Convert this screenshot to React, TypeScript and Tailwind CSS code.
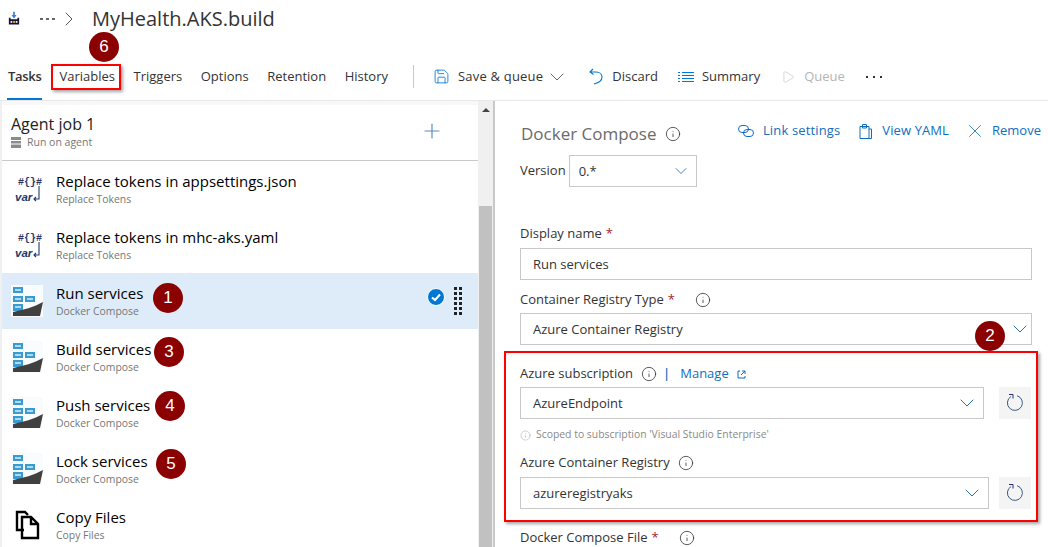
import React from "react";
import { ChevronDown, ChevronRight, Info, Plus, Play, Save, X } from "lucide-react";

const font = "font-['Open_Sans','Liberation_Sans',sans-serif]";

const Badge = ({ n, className }: { n: number; className: string }) => (
  <div className={`absolute flex h-[30px] w-[30px] items-center justify-center rounded-full bg-[#8b0000] font-['Liberation_Sans',sans-serif] text-[17px] text-white ${className}`}>
    {n}
  </div>
);

const DockerIcon = () => (
  <svg width="32" height="32" viewBox="0 0 32 32" className="shrink-0">
    <rect x="0" y="0" width="32" height="32" fill="#fafbfc" />
    <rect x="2" y="2" width="10" height="6" fill="#3a9bd0" />
    <rect x="2" y="11" width="10" height="6" fill="#3a9bd0" />
    <rect x="14" y="11" width="10" height="6" fill="#3a9bd0" />
    <rect x="2" y="19" width="10" height="7" fill="#3a9bd0" />
    <rect x="4" y="4" width="6" height="2" fill="#a9dcf3" />
    <rect x="4" y="13" width="6" height="2" fill="#a9dcf3" />
    <rect x="16" y="13" width="6" height="2" fill="#a9dcf3" />
    <rect x="4" y="21" width="6" height="2" fill="#a9dcf3" />
    <path d="M2 27 C12 25 23 22 32 17 L29 31 L2 31 Z" fill="#404040" />
  </svg>
);

const VarIcon = () => (
  <svg width="32" height="32" viewBox="0 0 32 32" className="shrink-0">
    <text x="7" y="12" fontSize="10" fontWeight="700" fill="#1f3a6e" fontFamily="Liberation Mono, monospace">{"#{}#"}</text>
    <text x="4" y="28" fontSize="11.5" fontStyle="italic" fontWeight="700" fill="#1f3a6e" fontFamily="Liberation Sans, sans-serif">var</text>
    <path d="M28 13 V26 H23 M25 24 L23 26 L25 28" fill="none" stroke="#1f3a6e" strokeWidth="1.1" />
  </svg>
);

const CopyIcon = () => (
  <svg width="32" height="32" viewBox="0 0 32 32" className="shrink-0">
    <path d="M13 21 H6 V3 H14 L17 6" fill="none" stroke="#000" strokeWidth="2.4" />
    <path d="M11 8 H20 L27 15 V29 H11 Z M20 8 V15 H27" fill="none" stroke="#000" strokeWidth="2.4" />
  </svg>
);

const FactoryIcon = () => (
  <svg width="12" height="15" viewBox="0 0 14 16">
    <path d="M7 0 V6" stroke="#3a7fd0" strokeWidth="2" />
    <path d="M4 4 L7 8 L10 4 Z" fill="#3a7fd0" />
    <path d="M1 7 H3 V9 H11 V7 H13 V15 H1 Z" fill="#1a1030" />
    <rect x="3" y="11" width="2" height="2" fill="#fff" />
    <rect x="6" y="11" width="2" height="2" fill="#f2d94e" />
    <rect x="9" y="11" width="2" height="2" fill="#fff" />
  </svg>
);

const rows = [
  { title: "Replace tokens in appsettings.json", sub: "Replace Tokens", icon: <VarIcon /> },
  { title: "Replace tokens in mhc-aks.yaml", sub: "Replace Tokens", icon: <VarIcon /> },
  { title: "Run services", sub: "Docker Compose", icon: <DockerIcon />, selected: true },
  { title: "Build services", sub: "Docker Compose", icon: <DockerIcon /> },
  { title: "Push services", sub: "Docker Compose", icon: <DockerIcon /> },
  { title: "Lock services", sub: "Docker Compose", icon: <DockerIcon /> },
  { title: "Copy Files", sub: "Copy Files", icon: <CopyIcon /> },
];

const TaskRow = ({ title, sub, icon, selected }: { title: string; sub: string; icon: React.ReactNode; selected?: boolean }) => (
  <div className={`flex h-14 shrink-0 items-center pl-[9px] ${selected ? "bg-[#deecf9]" : ""}`}>
    {icon}
    <div className="ml-[13px] flex-1">
      <div className="mb-[2px] text-[15px] leading-[19px] text-black">{title}</div>
      <div className="text-[10.4px] leading-[13px] text-[#767676]">{sub}</div>
    </div>
    {selected && (
      <div className="flex items-center">
        <svg width="18" height="18" viewBox="0 0 18 18" className="mb-[8px]">
          <circle cx="9" cy="9" r="8.5" fill="#0078d4" stroke="#fff" strokeWidth="1" />
          <path d="M5 9.5 L8 12 L13 6.5" fill="none" stroke="#fff" strokeWidth="2" />
        </svg>
        <div className="ml-[9px] mr-[16px] grid grid-cols-2 gap-x-[2px] gap-y-[2px]">
          {Array.from({ length: 12 }).map((_, i) => (
            <div key={i} className="h-[3px] w-[3px] bg-[#222]" />
          ))}
        </div>
      </div>
    )}
  </div>
);

const Select = ({ value, className, textClass = "pl-3", chevronClass = "mr-1", chevronSize = 24 }: { value: string; className: string; textClass?: string; chevronClass?: string; chevronSize?: number }) => (
  <div className={`flex h-8 items-center justify-between border border-[#c8c8c8] bg-white text-[13px] text-[#333] ${textClass} ${className}`}>
    <span className="pt-[2px]">{value}</span>
    <ChevronDown size={chevronSize} strokeWidth={1} className={`text-[#2b6ea8] ${chevronClass}`} />
  </div>
);

const RefreshButton = () => (
  <div className="flex h-8 w-8 items-center justify-center bg-[#f4f4f4]">
    <svg width="18" height="18" viewBox="0 0 18 18">
      <path d="M5 2.5 A7.5 7.5 0 1 0 11 1.7" fill="none" stroke="#3b5a85" strokeWidth="1" />
      <path d="M3 0.5 H7 V4.5" fill="none" stroke="#2a2a6a" strokeWidth="1" />
    </svg>
  </div>
);

const Label = ({ children }: { children: React.ReactNode }) => (
  <div className="flex h-5 items-center text-[13px] text-[#333]">{children}</div>
);

const InfoMark = ({ className = "" }: { className?: string }) => (
  <Info size={16} strokeWidth={1.2} className={`text-[#333] ${className}`} />
);

const tabs = ["Variables", "Triggers", "Options", "Retention", "History"];

export default function App() {
  return (
    <div className={`relative h-[547px] w-[1048px] overflow-hidden bg-white ${font}`}>
      {/* breadcrumb */}
      <div className="flex h-[37px] items-center pl-2">
        <FactoryIcon />
        <div className="ml-[20px] flex gap-[3px]">
          <div className="h-[2px] w-[3px] bg-[#666]" />
          <div className="h-[2px] w-[3px] bg-[#666]" />
          <div className="h-[2px] w-[3px] bg-[#666]" />
        </div>
        <ChevronRight size={24} strokeWidth={1} className="ml-[2px] text-[#555]" />
        <span className="ml-[11px] text-[20px] text-[#333]">MyHealth.AKS.build</span>
      </div>

      {/* toolbar */}
      <div className="flex h-[64px] items-center border-b border-[#e8e8e8] pt-[16px] text-[13px] text-[#333]">
        <div className="relative ml-2 flex h-[47px] items-center font-semibold tracking-[-0.3px]">
          Tasks
          <div className="absolute bottom-0 left-[-1px] h-[2px] w-[35px] bg-[#0078d4]" />
        </div>
        <div className="ml-[18px] flex items-center gap-[18.5px]">
          {tabs.map((t) => (
            <span key={t}>{t}</span>
          ))}
        </div>
        <div className="ml-[25px] h-[23px] w-px bg-[#c8c8c8]" />
        <Save size={17} strokeWidth={1.2} className="ml-[19px] text-[#0078d4]" />
        <span className="ml-[8px] tracking-[0.2px]">Save &amp; queue</span>
        <ChevronDown size={24} strokeWidth={1} className="ml-[2px] text-[#666]" />
        <svg width="14" height="17" viewBox="0 0 14 17" className="ml-[20px]">
          <path d="M4 1 L1 4 L4.5 6.5 M1 4 H7 C11 4 13 6.5 13 9 C13 12.5 9 15 5 16" fill="none" stroke="#0078d4" strokeWidth="1.1" />
        </svg>
        <span className="ml-[9px]">Discard</span>
        <svg width="16" height="12" viewBox="0 0 16 12" className="ml-[20px]">
          <path d="M0 1.5 H2 M4 1.5 H16 M0 4.5 H2 M4 4.5 H16 M0 7.5 H2 M4 7.5 H16 M0 10.5 H2 M4 10.5 H16" stroke="#0078d4" strokeWidth="1" />
        </svg>
        <span className="ml-[8px]">Summary</span>
        <Play size={14} strokeWidth={1} className="ml-[21px] text-[#bbb]" />
        <span className="ml-[9px] text-[#b4b4b4]">Queue</span>
        <div className="ml-[21px] flex gap-[5px]">
          <div className="h-[2px] w-[2px] bg-[#333]" />
          <div className="h-[2px] w-[2px] bg-[#333]" />
          <div className="h-[2px] w-[2px] bg-[#333]" />
        </div>
      </div>

      {/* panels */}
      <div className="flex h-[446px]">
        <div className="w-[2px] bg-[#f0f0f0]" />
        <div className="flex w-[476px] flex-col overflow-hidden bg-[#f8f8f8] pt-[4px]">
          <div className="flex h-[56px] shrink-0 items-center justify-between border-b border-[#c8c8c8] bg-white pb-[2px] pl-[9px] pr-[34px]">
            <div>
              <div className="text-[16px] leading-[20px] text-[#222]">Agent job 1</div>
              <div className="mt-[1px] flex items-center gap-[6px] text-[10.5px] leading-[14px] text-[#767676]">
                <svg width="10" height="11" viewBox="0 0 10 11">
                  <path d="M0 0 H10 V11 H0 Z" fill="#8a8a8a" />
                  <path d="M0 3.5 H10 M0 7 H10" stroke="#fff" strokeWidth="1" />
                </svg>
                Run on agent
              </div>
            </div>
            <Plus size={24} strokeWidth={1.2} className="mb-[2px] text-[#5b8ac4]" />
          </div>
          <div className="flex flex-1 flex-col bg-white">
            {rows.map((r) => (
              <TaskRow key={r.title} {...r} />
            ))}
          </div>
        </div>

        {/* scrollbar */}
        <div className="flex w-[17px] flex-col border-r-2 border-[#c8c8c8] bg-[#f0f0f0]">
          <div className="flex h-[105px] justify-center pt-[7px]">
            <div className="h-0 w-0 border-x-[4px] border-b-[4px] border-x-transparent border-b-[#444]" />
          </div>
          <div className="mx-auto w-[13px] flex-1 bg-[#c1c1c1]" />
        </div>

        {/* task settings */}
        <div className="flex-1 pl-[25px] pr-[16px] pt-[22px]">
          <div className="flex items-center justify-between">
            <div className="ml-px flex items-center text-[17px] leading-[22px] text-[#6b6b6b]">
              Docker Compose
              <Info size={16} strokeWidth={1.2} className="ml-[8px] text-[#333]" />
            </div>
            <div className="-mr-[9px] -mt-[6px] flex items-center text-[13px] text-[#106ebe]">
              <svg width="16" height="14" viewBox="0 0 16 14">
                <rect x="0.5" y="1.5" width="10" height="7" rx="3.5" fill="none" stroke="#106ebe" />
                <rect x="5.5" y="5.5" width="10" height="7" rx="3.5" fill="none" stroke="#106ebe" />
              </svg>
              <span className="ml-[9px] tracking-[0.15px]">Link settings</span>
              <svg width="13" height="15" viewBox="0 0 13 15" className="ml-[19px]">
                <path d="M1 2.5 H10 V14.5 H1 Z M3.5 0.5 H7.5 V4 H3.5 Z M10 5 H12.5 V14.5 H5" fill="none" stroke="#106ebe" />
              </svg>
              <span className="ml-[10px] tracking-[0.1px]">View YAML</span>
              <X size={22} strokeWidth={0.9} className="ml-[15px]" />
              <span className="ml-[6px]">Remove</span>
            </div>
          </div>

          <div className="mt-[10px] flex items-start">
            <span className="mt-[5px] text-[13px] leading-[20px] text-[#333]">Version</span>
            <Select value="0.*" className="ml-[3px] w-[128px]" textClass="pl-[9px]" chevronClass="mr-[5px]" chevronSize={20} />
          </div>

          <div className="mt-[37px]">
            <Label>Display name <span className="ml-1 text-[#a4262c]">*</span></Label>
            <div className="mt-[4px] flex h-8 items-center border border-[#c8c8c8] pl-3 pt-[1px] text-[13px] text-[#333]">Run services</div>
          </div>

          <div className="mt-[10px]">
            <Label>Container Registry Type <span className="ml-1 text-[#a4262c]">*</span><InfoMark className="ml-[20px]" /></Label>
            <Select value="Azure Container Registry" className="mt-[3px] w-full" chevronClass="-mr-[1px]" />
          </div>

          <div className="mt-[19px]">
            <Label>
              Azure subscription
              <InfoMark className="ml-[8px]" />
              <span className="ml-[6px] font-semibold text-[#106ebe]">|</span>
              <span className="ml-[10px] text-[#106ebe]">Manage</span>
              <svg width="9" height="9" viewBox="0 0 9 9" className="ml-[8px]">
                <path d="M3 1 H1 V8 H8 V6 M5 1 H8 V4 M8 1 L4 5" fill="none" stroke="#106ebe" />
              </svg>
            </Label>
            <div className="mt-[3px] flex items-center">
              <Select value="AzureEndpoint" className="w-[464px]" />
              <div className="ml-[15px]"><RefreshButton /></div>
            </div>
          </div>

          <div className="mt-[8px] flex h-[16px] items-center gap-[5px] text-[10.4px] text-[#8a8a8a]">
            <Info size={11} strokeWidth={1} className="text-[#999]" />
            Scoped to subscription 'Visual Studio Enterprise'
          </div>

          <div className="mt-[10px]">
            <Label>Azure Container Registry <InfoMark className="ml-[8px]" /></Label>
            <div className="mt-[4px] flex items-center">
              <Select value="azureregistryaks" className="w-[469px]" />
              <div className="ml-[10px]"><RefreshButton /></div>
            </div>
          </div>

          <div className="mt-[19px]">
            <Label>Docker Compose File <span className="ml-1 text-[#a4262c]">*</span><InfoMark className="ml-[20px]" /></Label>
          </div>
        </div>
      </div>

      {/* annotations over the page */}
      <div className="absolute left-[51px] top-[64px] h-[26px] w-[70px] border-2 border-[#ff0000] shadow-[2px_2px_3px_rgba(0,0,0,0.35)]" />
      <div className="absolute left-[504px] top-[351px] h-[171px] w-[534px] border-2 border-[#ff0000] shadow-[2px_2px_3px_rgba(0,0,0,0.35)]" />
      <Badge n={6} className="left-[89px] top-[32px]" />
      <Badge n={1} className="left-[153px] top-[283px]" />
      <Badge n={3} className="left-[154px] top-[337px]" />
      <Badge n={4} className="left-[155px] top-[391px]" />
      <Badge n={5} className="left-[156px] top-[449px]" />
      <Badge n={2} className="left-[975px] top-[321px]" />
    </div>
  );
}
